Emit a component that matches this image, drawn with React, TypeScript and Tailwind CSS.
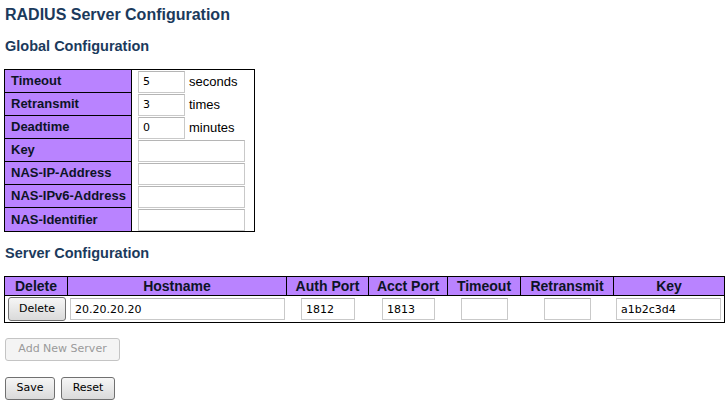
import React from "react";

const labels = [
  { name: "Timeout", value: "5", unit: "seconds" },
  { name: "Retransmit", value: "3", unit: "times" },
  { name: "Deadtime", value: "0", unit: "minutes" },
  { name: "Key", value: "", unit: "" },
  { name: "NAS-IP-Address", value: "", unit: "" },
  { name: "NAS-IPv6-Address", value: "", unit: "" },
  { name: "NAS-Identifier", value: "", unit: "" },
];

const Input: React.FC<{ value: string; className: string }> = ({ value, className }) => (
  <input
    type="text"
    defaultValue={value}
    className={
      "h-[22px] border border-[#c9c9c9] border-t-[#b5b5b5] bg-white px-[4px] text-[11px] text-black outline-none font-['DejaVu_Sans',sans-serif] " +
      className
    }
  />
);

const Button: React.FC<{ label: string; disabled?: boolean; className: string }> = ({
  label,
  disabled,
  className,
}) => (
  <button
    type="button"
    disabled={disabled}
    className={
      "rounded-[3px] border text-[11px] font-['DejaVu_Sans',sans-serif] " +
      (disabled
        ? "border-[#c4c4c4] bg-[#f4f4f4] text-[#9a9a9a] "
        : "border-[#707070] bg-gradient-to-b from-[#f6f6f6] to-[#dadada] text-black ") +
      className
    }
  >
    {label}
  </button>
);

const App: React.FC = () => {
  return (
    <div className="min-h-[406px] bg-white pl-[5px] pt-[5px] font-['Liberation_Sans',Arial,sans-serif] text-black">
      <h1 className="h-[20px] text-[16px] font-bold leading-[20px] text-[#1b3a5c]">
        RADIUS Server Configuration
      </h1>
      <h2 className="mt-[12px] h-[18px] text-[14.5px] font-bold leading-[18px] text-[#1b3a5c]">
        Global Configuration
      </h2>

      <div className="-ml-[1px] mt-[14px] w-[251px] border border-black">
        {labels.map((row, i) => {
          const last = i === labels.length - 1;
          const short = row.unit !== "";
          return (
            <div key={row.name} className="flex h-[23px]">
              <div
                className={
                  "flex w-[127px] items-center border-r border-black bg-[#b983ff] pl-[6px] text-[13px] font-bold text-[#0d1426] " +
                  (last ? "" : "border-b")
                }
              >
                {row.name}
              </div>
              <div className="flex items-center pl-[6px]">
                <Input value={row.value} className={short ? "w-[47px]" : "w-[107px]"} />
                {short && <span className="ml-[4px] text-[13px]">{row.unit}</span>}
              </div>
            </div>
          );
        })}
      </div>

      <h2 className="mt-[12px] h-[18px] text-[14.5px] font-bold leading-[18px] text-[#1b3a5c]">
        Server Configuration
      </h2>

      <div className="-ml-[1px] mt-[14px] w-[721px] border border-black">
        <div className="flex h-[19px] border-b border-black bg-[#b983ff] text-[14px] font-bold text-[#0d1426]">
          <div className="flex w-[63px] items-center justify-center border-r border-black">Delete</div>
          <div className="flex w-[219px] items-center justify-center border-r border-black">Hostname</div>
          <div className="flex w-[82px] items-center justify-center border-r border-black">Auth Port</div>
          <div className="flex w-[79px] items-center justify-center border-r border-black">Acct Port</div>
          <div className="flex w-[73px] items-center justify-center border-r border-black">Timeout</div>
          <div className="flex w-[93px] items-center justify-center border-r border-black">Retransmit</div>
          <div className="flex w-[110px] items-center justify-center">Key</div>
        </div>
        <div className="flex h-[26px] items-center">
          <div className="flex w-[63px] items-center pl-[3px]">
            <Button label="Delete" className="h-[24px] w-[58px]" />
          </div>
          <div className="flex w-[219px] items-center pl-[2px]">
            <Input value="20.20.20.20" className="w-[215px]" />
          </div>
          <div className="flex w-[82px] items-center justify-center">
            <Input value="1812" className="w-[54px]" />
          </div>
          <div className="flex w-[79px] items-center justify-center">
            <Input value="1813" className="w-[53px]" />
          </div>
          <div className="flex w-[73px] items-center justify-center">
            <Input value="" className="w-[47px]" />
          </div>
          <div className="flex w-[93px] items-center justify-center">
            <Input value="" className="w-[47px]" />
          </div>
          <div className="flex w-[110px] items-center pl-[2px]">
            <Input value="a1b2c3d4" className="w-[105px]" />
          </div>
        </div>
      </div>

      <Button label="Add New Server" disabled className="mt-[15px] block h-[23px] w-[115px]" />

      <div className="mt-[16px] flex gap-[6px]">
        <Button label="Save" className="h-[23px] w-[50px]" />
        <Button label="Reset" className="h-[23px] w-[54px]" />
      </div>
    </div>
  );
};

export default App;
